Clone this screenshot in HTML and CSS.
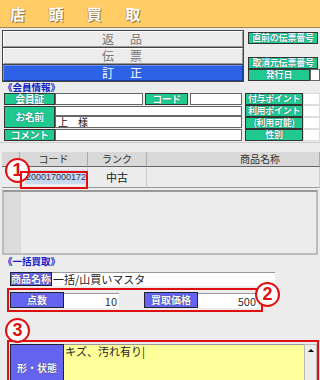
FILE: index.html
```html
<!DOCTYPE html>
<html lang="ja">
<head>
    <meta charset="UTF-8">
    <title>店頭買取</title>
    <link rel="stylesheet" href="styles.css">
</head>
<body>
    <div class="header">店 頭 買 取</div>

    <div class="top">
        <div class="slip">
            <div class="slip-row">返　品</div>
            <div class="slip-row">伝　票</div>
            <div class="slip-row active">訂　正</div>
        </div>
        <div class="nos">
            <div class="glabel wide">直前の伝票番号</div>
            <div class="nos-gap"></div>
            <div class="glabel wide">取消元伝票番号</div>
            <div class="nos-line">
                <div class="glabel">発行日</div>
                <div class="box"></div>
            </div>
        </div>
    </div>

    <div class="title">《会員情報》</div>
    <div class="member">
        <div class="member-left">
            <div class="glabel">会員証</div>
            <div class="card-row">
                <div class="box"></div>
                <div class="glabel">コード</div>
                <div class="box"></div>
            </div>
            <div class="glabel">お名前</div>
            <div class="name-col">
                <div class="box"></div>
                <div class="box text">上　様</div>
            </div>
            <div class="glabel">コメント</div>
            <div class="box"></div>
        </div>
        <div class="member-right">
            <div class="glabel">付与ポイント</div><div class="box"></div>
            <div class="glabel">利用ポイント</div><div class="box"></div>
            <div class="glabel">(利用可能)</div><div class="box"></div>
            <div class="glabel">性別</div><div class="box"></div>
        </div>
    </div>

    <div class="grid-wrap">
        <div class="grid">
            <div class="gh"></div>
            <div class="gh">コード</div>
            <div class="gh">ランク</div>
            <div class="gh">商品名称</div>
            <div class="gd"></div>
            <div class="gd code"><span class="sel">200017000172</span></div>
            <div class="gd">中古</div>
            <div class="gd"></div>
        </div>
        <div class="mark one">1</div>
        <div class="redbox code-box"></div>
    </div>

    <div class="panel">
        <div class="panel-side"></div>
    </div>

    <div class="title bulk-title">《一括買取》</div>
    <div class="bulk">
        <div class="name-line">
            <div class="blabel">商品名称</div>
            <div class="name-input">一括/山買いマスタ</div>
        </div>
        <div class="qty-wrap">
            <div class="qty redline">
                <div class="blabel big">点数</div>
                <div class="num">10</div>
                <div class="spacer"></div>
                <div class="blabel big">買取価格</div>
                <div class="num wide">500</div>
            </div>
            <div class="mark two">2</div>
        </div>
    </div>

    <div class="cond-wrap">
        <div class="mark three">3</div>
        <div class="cond redline">
            <div class="blabel tall">形・状態</div>
            <div class="memo">キズ、汚れ有り|</div>
            <div class="scroll"><span class="arrow"></span></div>
        </div>
    </div>
</body>
</html>
```

FILE: styles.css
```css
body {
    margin: 0;
    width: 320px;
    height: 380px;
    overflow: hidden;
    background: #ececec;
    font-family: "Noto Sans CJK JP", "Noto Sans", sans-serif;
    font-size: 10px;
    color: #222;
}
.header {
    height: 27px;
    line-height: 27px;
    padding-left: 10px;
    background: #ffcc66;
    border-bottom: 1px solid #a08850;
    color: #fff;
    font-size: 15px;
    font-weight: bold;
    letter-spacing: 10px;
    text-shadow: 1px 1px 0 #9a7a40, -1px 0 0 #c8a060;
}
.top {
    display: flex;
    gap: 4px;
    padding: 2px 0 0 2px;
}
.slip {
    width: 240px;
    height: 50px;
    border: 1px solid #444;
    display: flex;
    flex-direction: column;
    gap: 1px;
    background: #444;
}
.slip-row {
    height: 14px;
    line-height: 14px;
    background: #ececec;
    border: 1px solid #fff;
    border-right-color: #999;
    border-bottom-color: #999;
    text-align: right;
    padding-right: 98px;
    font-size: 12px;
    color: #777;
    letter-spacing: 2px;
}
.slip-row.active {
    background: #2e62e6;
    color: #fff;
    border-color: #6a90f0 #1a3a9a #1a3a9a #6a90f0;
}
.nos {
    flex: 1;
    display: flex;
    flex-direction: column;
    padding-top: 2px;
}
.nos .glabel {
    font-size: 9px;
    letter-spacing: -0.2px;
}
.nos-gap {
    height: 13px;
}
.nos-line {
    display: flex;
}
.nos-line .glabel {
    width: 60px;
}
.nos-line .box {
    flex: 1;
}
.glabel {
    background: #20c98e;
    border: 1px solid #333;
    color: #fff;
    font-weight: bold;
    text-align: center;
    height: 10px;
    line-height: 10px;
    font-size: 10px;
    letter-spacing: -0.5px;
    text-shadow: 0 0 1px #135;
    white-space: nowrap;
}
.glabel.wide {
    width: 68px;
}
.box {
    background: #fff;
    border: 1px solid #666;
    height: 10px;
}
.box.text {
    line-height: 10px;
    padding-left: 2px;
    font-size: 10px;
    color: #111;
}
.title {
    height: 11px;
    line-height: 11px;
    padding-left: 3px;
    color: #1018c8;
    font-weight: bold;
    font-size: 9.5px;
}
.member {
    display: flex;
    gap: 3px;
    padding-left: 4px;
}
.member-left {
    width: 238px;
    display: grid;
    grid-template-columns: 51px 1fr;
    grid-template-rows: 12px 22px 12px;
    gap: 1px 0;
}
.member-left > .glabel {
    height: auto;
    display: flex;
    align-items: center;
    justify-content: center;
}
.card-row {
    display: grid;
    grid-template-columns: 88px 43px 1fr;
    gap: 2px;
}
.card-row .glabel {
    height: auto;
}
.name-col {
    display: flex;
    flex-direction: column;
}
.name-col .box {
    flex: 1;
    height: auto;
}
.member-right {
    flex: 1;
    display: grid;
    grid-template-columns: 58px 1fr;
    grid-template-rows: repeat(4, 12px);
}
.member-right .glabel {
    height: auto;
    font-size: 9px;
    letter-spacing: -0.3px;
}
.member-right .box {
    height: auto;
    border-color: #ddd;
}
.grid-wrap {
    position: relative;
    margin-top: 1px;
    border-top: 1px solid #ccc;
    padding: 9px 0 0 2px;
}
.grid {
    display: grid;
    grid-template-columns: 18px 68px 59px 1fr;
}
.gh {
    height: 14px;
    line-height: 14px;
    text-align: center;
    background: #d8d8d8;
    border-right: 1px solid #aaa;
    border-bottom: 1px solid #666;
    color: #333;
}
.gh:nth-child(4) {
    padding-left: 93px;
    text-align: left;
}
.gd {
    height: 20px;
    line-height: 20px;
    text-align: center;
    border-right: 1px solid #ccc;
    border-bottom: 1px solid #999;
    font-size: 11px;
}
.gd.code {
    text-align: right;
    font-family: "Liberation Sans", Arial, sans-serif;
    font-size: 9px;
}
.sel {
    background: #c6daf0;
    color: #335;
    padding: 2px 1px;
}
.mark {
    position: absolute;
    width: 21px;
    height: 21px;
    border: 2px solid #e01010;
    border-radius: 50%;
    background: #fff;
    color: #e01010;
    font-family: "Liberation Sans", Arial, sans-serif;
    font-weight: bold;
    font-size: 18px;
    line-height: 21px;
    text-align: center;
}
.mark.one {
    left: 5px;
    top: 15px;
}
.redbox {
    position: absolute;
    border: 2px solid #e01010;
}
.code-box {
    left: 20px;
    top: 28px;
    width: 64px;
    height: 14px;
}
.panel {
    margin: 2px 2px 0 2px;
    height: 61px;
    border: 2px solid #bbb;
    border-top-color: #999;
    background: #ececec;
    display: flex;
}
.panel-side {
    width: 17px;
    background: #dcdcdc;
}
.bulk-title {
    height: 13px;
    line-height: 13px;
}
.bulk {
    padding-left: 7px;
}
.name-line {
    display: flex;
    margin: 4px 0 2px 3px;
    width: 265px;
}
.blabel {
    background: #6464f0;
    border: 1px solid #223;
    color: #fff;
    font-weight: bold;
    font-size: 10px;
    text-align: center;
    text-shadow: 0 0 1px #113;
}
.name-line .blabel {
    width: 40px;
    height: 12px;
    line-height: 12px;
}
.name-input {
    flex: 1;
    background: #fff;
    border-top: 1px solid #999;
    height: 13px;
    line-height: 13px;
    font-size: 11px;
    padding-left: 1px;
}
.qty-wrap {
    position: relative;
}
.redline {
    border: 2px solid #e01010;
}
.qty {
    width: 250px;
    height: 18px;
    padding: 1px;
    display: flex;
    align-items: center;
}
.blabel.big {
    height: 14px;
    line-height: 14px;
    width: 52px;
}
.num {
    width: 53px;
    height: 14px;
    line-height: 14px;
    background: #fff;
    border-top: 1px solid #999;
    text-align: right;
    padding-right: 2px;
    font-size: 11px;
    color: #333;
}
.num.wide {
    width: 58px;
}
.spacer {
    width: 25px;
}
.mark.two {
    left: 248px;
    top: -6px;
}
.cond-wrap {
    position: relative;
    margin-top: 28px;
    padding-left: 7px;
}
.mark.three {
    left: 5px;
    top: -22px;
}
.cond {
    width: 307px;
    height: 50px;
    padding: 2px 0 0 1px;
    display: flex;
}
.blabel.tall {
    width: 52px;
    padding-top: 15px;
}
.memo {
    flex: 1;
    background: #ffff99;
    border-top: 1px solid #999;
    font-size: 11px;
    line-height: 13px;
    padding-left: 1px;
}
.scroll {
    width: 11px;
    background: #ececec;
    border: 1px solid #bbb;
    display: flex;
    justify-content: center;
}
.arrow {
    margin-top: 4px;
    width: 0;
    height: 0;
    border-left: 3px solid transparent;
    border-right: 3px solid transparent;
    border-bottom: 3px solid #000;
}
```
